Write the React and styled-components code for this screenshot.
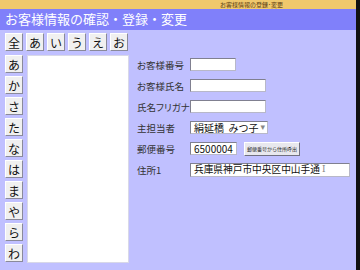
import styled, { createGlobalStyle } from "styled-components";

const GlobalStyle = createGlobalStyle`
  html, body {
    margin: 0;
    padding: 0;
    background: #111;
  }
  body {
    font-family: "Noto Sans CJK JP", "Noto Sans", sans-serif;
  }
`

const Page = styled.div`
  width: 356px;
  height: 270px;
  background-color: #C0C0FF;
  overflow: hidden;
`

const TopBar = styled.div`
  height: 9px;
  background-color: #F0C86C;
  font-size: 6px;
  line-height: 9px;
  color: #5a3a10;
  padding-left: 220px;
  white-space: nowrap;
`

const TitleBar = styled.div`
  height: 21px;
  background-color: #8080FA;
  color: #fff;
  font-size: 13px;
  line-height: 20px;
  padding-left: 5px;
  white-space: nowrap;
`

const Main = styled.div`
  display: flex;
  padding: 3px 0 0 5px;
`

const KanaPanel = styled.div`
  display: flex;
  flex-direction: column;
  gap: 4px;
`

const KanaRow = styled.div`
  display: flex;
  gap: ${props => props.gap || 3}px;
`

const KanaColumn = styled.div`
  display: flex;
  flex-direction: column;
  gap: 3px;
`

const KanaButton = styled.div`
  width: 18px;
  height: 18px;
  box-sizing: border-box;
  background: #F0F0F0;
  border: 1px solid #fff;
  border-right-color: #8a8a9a;
  border-bottom-color: #8a8a9a;
  display: flex;
  align-items: center;
  justify-content: center;
  font-size: 12px;
  color: #111;
`

const ListBox = styled.div`
  width: 102px;
  height: 208px;
  box-sizing: border-box;
  background: #fff;
  border: 1px solid #d8d8e8;
`

const Form = styled.div`
  display: grid;
  grid-template-columns: 53px auto;
  grid-auto-rows: 21px;
  align-items: center;
  margin: 21px 0 0 8px;
`

const Label = styled.div`
  font-size: 9.5px;
  color: #333;
  white-space: nowrap;
  font-feature-settings: "palt";
`

const Field = styled.div`
  display: flex;
  align-items: center;
  gap: 7px;
`

const Input = styled.div`
  width: ${props => props.width}px;
  height: ${props => props.height || 13}px;
  box-sizing: border-box;
  background: #fff;
  border: 1px solid #b8b8c8;
  border-top-color: #808090;
  border-left-color: #808090;
  font-size: ${props => props.size || 10}px;
  line-height: 11px;
  padding-left: 3px;
  color: #111;
  white-space: nowrap;
  display: flex;
  align-items: center;
`

const Select = styled(Input)`
  justify-content: space-between;
  padding-right: 3px;
  font-size: 10px;
`

const Caret = styled.span`
  font-family: "DejaVu Serif", serif;
  color: #888;
  font-size: 9px;
  margin-left: 2px;
`

const ZipButton = styled.div`
  width: 56px;
  height: 14px;
  box-sizing: border-box;
  background: #E8E8EE;
  border: 1px solid #fff;
  border-right-color: #707080;
  border-bottom-color: #707080;
  font-size: 5px;
  color: #222;
  display: flex;
  align-items: center;
  justify-content: center;
  white-space: nowrap;
`

const kanaTop = ["全", "あ", "い", "う", "え", "お"]
const kanaSide = ["あ", "か", "さ", "た", "な", "は", "ま", "や", "ら", "わ"]

const App = () => {
  return (
    <Page>
      <GlobalStyle />
      <TopBar>お客様情報の登録･変更</TopBar>
      <TitleBar>お客様情報の確認・登録・変更</TitleBar>
      <Main>
        <KanaPanel>
          <KanaRow>
            {kanaTop.map(k => <KanaButton key={k}>{k}</KanaButton>)}
          </KanaRow>
          <KanaRow gap={4}>
            <KanaColumn>
              {kanaSide.map(k => <KanaButton key={k}>{k}</KanaButton>)}
            </KanaColumn>
            <ListBox />
          </KanaRow>
        </KanaPanel>
        <Form>
          <Label>お客様番号</Label>
          <Field><Input width={46} /></Field>
          <Label>お客様氏名</Label>
          <Field><Input width={76} /></Field>
          <Label>氏名フリガナ</Label>
          <Field><Input width={76} /></Field>
          <Label>主担当者</Label>
          <Field>
            <Select width={78}>
              <span>絹延橋&nbsp;&nbsp;みつ子</span>
              <Caret>▾</Caret>
            </Select>
          </Field>
          <Label>郵便番号</Label>
          <Field>
            <Input width={47}>6500004</Input>
            <ZipButton>郵便番号から住所呼出</ZipButton>
          </Field>
          <Label>住所1</Label>
          <Field>
            <Input width={160} height={14} size={9.7}>
              兵庫県神戸市中央区中山手通<Caret>I</Caret>
            </Input>
          </Field>
        </Form>
      </Main>
    </Page>
  )
}

export default App
